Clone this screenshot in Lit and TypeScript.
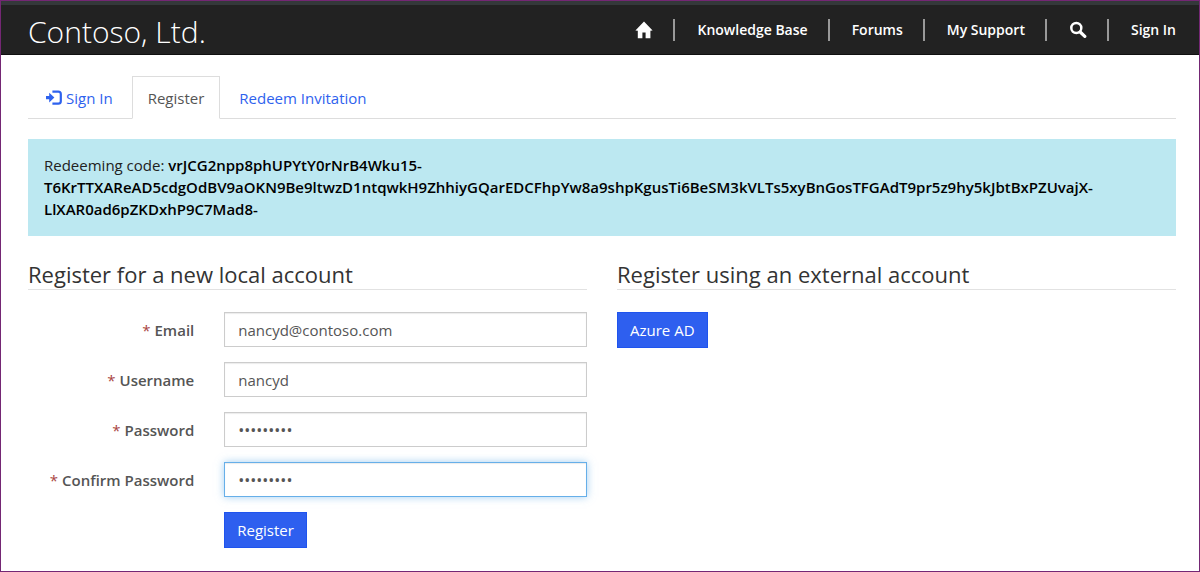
import { LitElement, html, css, svg, nothing } from "lit";
import { customElement, state } from "lit/decorators.js";

const homeIcon = svg`<svg class="icon" viewBox="0 0 18 18" aria-hidden="true"><path d="M9 0.6 L17.6 9.4 L15.4 9.8 V17.2 H10.6 V11.4 H7.4 V17.2 H2.8 V9.8 L0.4 9.4 Z" fill="currentColor"/></svg>`;
const searchIcon = svg`<svg class="icon" viewBox="0 0 18 18" aria-hidden="true"><circle cx="7.3" cy="7" r="5" fill="none" stroke="currentColor" stroke-width="2.5"/><path d="M11.2 11 L15.8 15.4" stroke="currentColor" stroke-width="3.2" stroke-linecap="round" fill="none"/></svg>`;
const loginIcon = svg`<svg class="icon" viewBox="0 0 18 18" aria-hidden="true"><path d="M2 7 H5.2 V3.8 L10.4 8.6 L5.2 13.4 V10.2 H2 Z" fill="currentColor"/><path d="M8.4 2.6 H14.2 Q16.8 2.6 16.8 5 V12.2 Q16.8 14.6 14.2 14.6 H8.4" fill="none" stroke="currentColor" stroke-width="2.2"/></svg>`;

interface Field {
  id: string;
  label: string;
  type: string;
  value: string;
  current?: boolean;
}

@customElement("app-root")
export class AppRoot extends LitElement {
  @state() private fields: Field[] = [
    { id: "email", label: "Email", type: "email", value: "nancyd@contoso.com" },
    { id: "username", label: "Username", type: "text", value: "nancyd" },
    { id: "password", label: "Password", type: "password", value: "contoso12" },
    { id: "confirm", label: "Confirm Password", type: "password", value: "contoso12", current: true },
  ];

  static styles = css`
    :host {
      display: block;
      box-sizing: border-box;
      min-height: 100vh;
      border: 1px solid #742774;
      background: #fff;
      color: #333;
      font-family: "Open Sans", "Noto Sans", sans-serif;
      font-size: 15px;
      line-height: 22px;
    }
    *, *::before, *::after { box-sizing: border-box; }
    a { color: #2e62ee; text-decoration: none; }
    ul { list-style: none; margin: 0; padding: 0; }
    .icon { display: block; width: 18px; height: 18px; }

    .bar {
      display: flex;
      align-items: center;
      justify-content: space-between;
      height: 54px;
      padding: 0 23px 0 27px;
      border-top: 4px solid #34383a;
      border-bottom: 1px solid #101010;
      background: #222;
    }
    .brand { padding-top: 4px; color: #fff; font-size: 30px; font-weight: 300; line-height: 40px; }
    .menu { display: flex; align-items: center; }
    .menu li { display: flex; align-items: center; height: 22px; }
    .menu li + li { margin-left: 20px; padding-left: 22px; border-left: 2px solid #999; }
    .menu a { color: #fff; font-size: 14px; font-weight: 600; }

    .page { padding: 21px 23px 22px 27px; }
    .tabs { display: flex; gap: 3px; border-bottom: 1px solid #ddd; }
    .tabs a {
      display: flex;
      align-items: center;
      gap: 4px;
      height: 43px;
      margin-bottom: -1px;
      padding: 0 15px;
      border: 1px solid transparent;
    }
    .tabs a.on { border-color: #ddd; border-bottom-color: #fff; background: #fff; color: #555; }

    .notice {
      margin: 20px 0 23px;
      padding: 15px 16px 16px;
      background: #bce8f1;
      color: #222;
      overflow-wrap: break-word;
    }
    .notice strong { color: #000; font-weight: 600; }

    .columns { display: grid; grid-template-columns: 1fr 1fr; gap: 30px; }
    h2 {
      margin: 0 0 22px;
      border-bottom: 1px solid #e2e2e2;
      font-size: 22px;
      font-weight: 400;
      line-height: 30px;
    }
    form { display: grid; gap: 15px; }
    .row { display: grid; grid-template-columns: 11fr 24fr; column-gap: 30px; align-items: center; }
    label { text-align: right; font-weight: 600; color: #555; }
    .star { color: #a94442; font-weight: 400; }
    input {
      width: 100%;
      height: 35px;
      padding: 0 13px;
      border: 1px solid #ccc;
      border-radius: 0;
      outline: none;
      background: #fff;
      box-shadow: inset 0 1px 1px rgba(0, 0, 0, 0.08);
      color: #555;
      font: inherit;
    }
    input[type="password"] { font-size: 16px; }
    input.current, input:focus {
      border-color: #66afe9;
      box-shadow: inset 0 1px 1px rgba(0, 0, 0, 0.08), 0 0 8px rgba(102, 175, 233, 0.6);
    }
    button {
      justify-self: start;
      height: 36px;
      padding: 0 12px;
      border: 1px solid #1f54ee;
      border-radius: 0;
      background: #2e5fef;
      color: #fff;
      font: inherit;
    }
    .row button { grid-column: 2; }
  `;

  render() {
    return html`
      <header class="bar">
        <a class="brand" href="#">Contoso, Ltd.</a>
        <nav>
          <ul class="menu">
            <li><a href="#" aria-label="Home">${homeIcon}</a></li>
            <li><a href="#">Knowledge Base</a></li>
            <li><a href="#">Forums</a></li>
            <li><a href="#">My Support</a></li>
            <li><a href="#" aria-label="Search">${searchIcon}</a></li>
            <li><a href="#">Sign In</a></li>
          </ul>
        </nav>
      </header>
      <main class="page">
        <ul class="tabs">
          <li><a href="#">${loginIcon}Sign In</a></li>
          <li><a class="on" href="#" aria-current="page">Register</a></li>
          <li><a href="#">Redeem Invitation</a></li>
        </ul>
        <div class="notice">
          Redeeming code:
          <strong>vrJCG2npp8phUPYtY0rNrB4Wku15-<wbr>T6KrTTXAReAD5cdgOdBV9aOKN9Be9ltwzD1ntqwkH9ZhhiyGQarEDCFhpYw8a9shpKgusTi6BeSM3kVLTs5xyBnGosTFGAdT9pr5z9hy5kJbtBxPZUvajX-<wbr>LlXAR0ad6pZKDxhP9C7Mad8-</strong>
        </div>
        <div class="columns">
          <section>
            <h2>Register for a new local account</h2>
            <form @submit=${(e: Event) => e.preventDefault()}>
              ${this.fields.map((f) => html`
                <div class="row">
                  <label for=${f.id}><span class="star">*</span> ${f.label}</label>
                  <input id=${f.id} type=${f.type} class=${f.current ? "current" : nothing} .value=${f.value} />
                </div>`)}
              <div class="row"><button type="submit">Register</button></div>
            </form>
          </section>
          <section>
            <h2>Register using an external account</h2>
            <button type="button">Azure AD</button>
          </section>
        </div>
      </main>
    `;
  }
}
